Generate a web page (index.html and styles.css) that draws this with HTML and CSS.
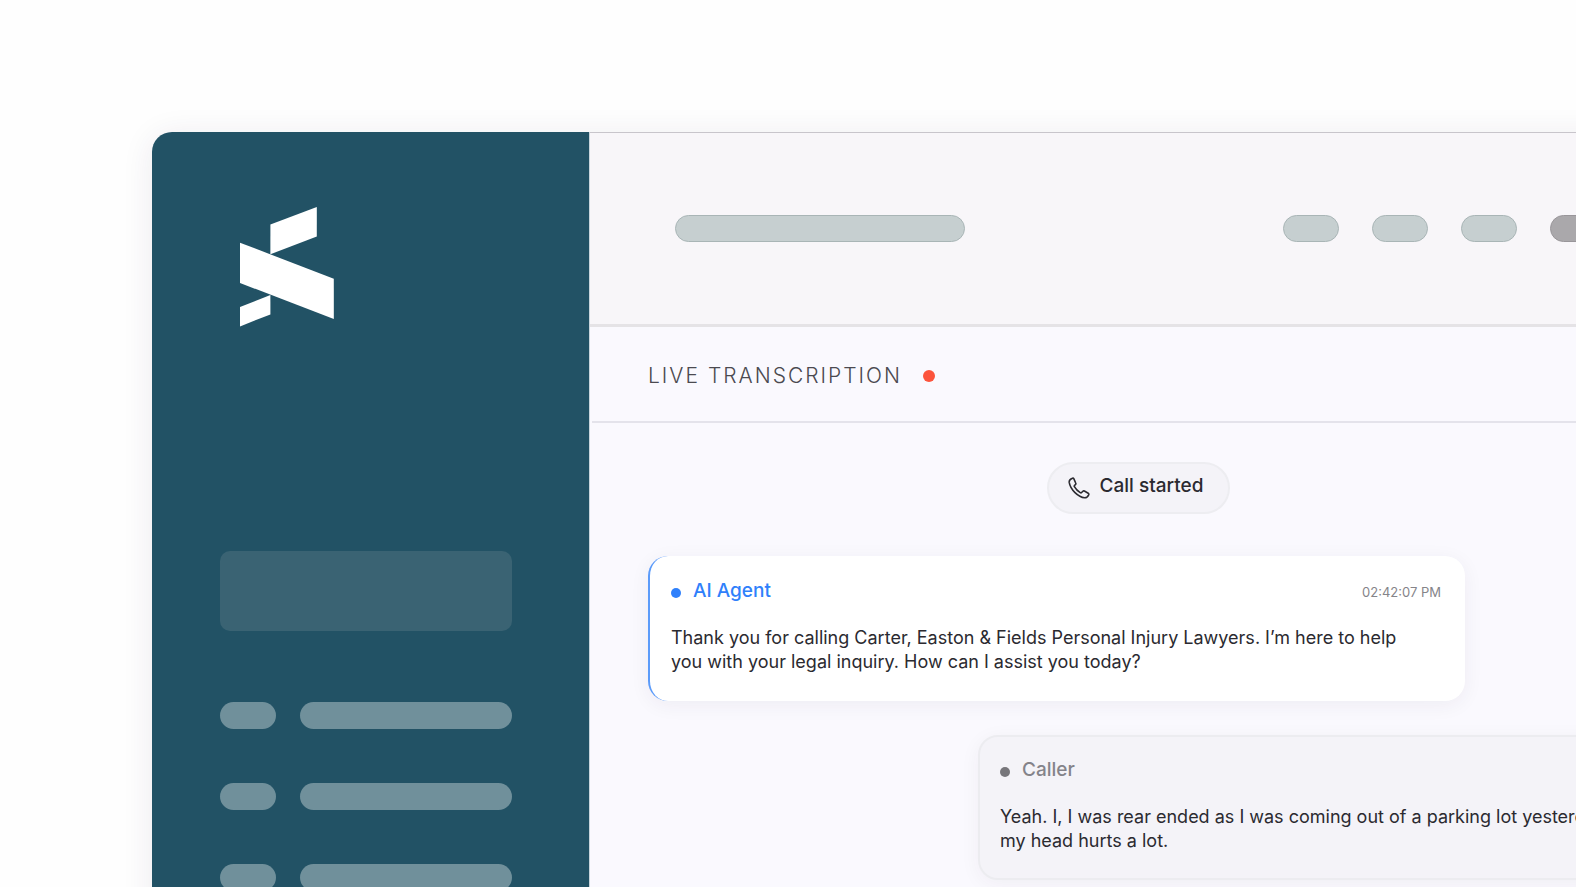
FILE: index.html
```html
<!DOCTYPE html>
<html lang="en">
<head>
<meta charset="utf-8">
<title>Live transcription</title>
<link rel="stylesheet" href="styles.css">
</head>
<body>
<div class="app">
  <aside class="sidebar">
    <svg class="logo" width="94" height="120" viewBox="0 0 94 120" fill="#fff" aria-hidden="true">
      <path d="M30.4 17.4 76.8 0v29.4L30.4 47.2z"/>
      <path d="M0 35.700 93.800 71.700v40.300L0 76z"/>
      <path d="M0 100 30.400 88v19.400L0 119.400z"/>
    </svg>
    <div class="feature"></div>
    <ul class="nav">
      <li class="nav-row"><span class="bar short"></span><span class="bar long"></span></li>
      <li class="nav-row"><span class="bar short"></span><span class="bar long"></span></li>
      <li class="nav-row"><span class="bar short"></span><span class="bar long"></span></li>
    </ul>
  </aside>
  <main class="main">
    <header class="topbar">
      <span class="pill wide"></span>
      <div class="actions">
        <span class="pill"></span><span class="pill"></span><span class="pill"></span><span class="pill dark"></span>
      </div>
    </header>
    <div class="heading">
      <h1 class="title">LIVE TRANSCRIPTION</h1>
      <span class="live-dot"></span>
    </div>
    <section class="transcript">
      <div class="event">
        <svg width="22" height="22" viewBox="0 0 22 22" fill="none" stroke="#2b2a30" stroke-width="1.600" stroke-linejoin="round" stroke-linecap="round" aria-hidden="true">
          <path d="M4.500 1.200 C3 1.700 1 3.200 1.200 5.400 C1.800 9 4 12.700 7 15.600 C10 18.500 13.400 20.500 16.600 20.800 C18.500 20.900 20 19.300 20.700 17.800 C21 17 20.800 16.600 20.200 16.200 L16.400 14 C15.800 13.700 15.300 13.800 14.900 14.200 L13.600 15.500 C13.200 15.900 12.700 15.900 12.200 15.600 C9.800 14.200 7.700 12 6.400 9.700 C6.100 9.200 6.200 8.800 6.600 8.400 L7.500 7.500 C7.900 7.100 8 6.600 7.700 6 L5.900 1.900 C5.600 1.300 5.100 1 4.500 1.200 Z"/>
        </svg>
        <span class="event-label">Call started</span>
      </div>
      <article class="message agent">
        <div class="meta">
          <span class="dot"></span>
          <h2 class="speaker">AI Agent</h2>
          <time class="time">02:42:07 PM</time>
        </div>
        <p class="text">Thank you for calling Carter, Easton &amp; Fields Personal Injury Lawyers. I’m here to help<br>you with your legal inquiry. How can I assist you today?</p>
      </article>
      <article class="message caller">
        <div class="meta">
          <span class="dot"></span>
          <h2 class="speaker">Caller</h2>
        </div>
        <p class="text">Yeah. I, I was rear ended as I was coming out of a parking lot yesterday<br>my head hurts a lot.</p>
      </article>
    </section>
  </main>
</div>
</body>
</html>
```
FILE: styles.css
```css
* { box-sizing: border-box; }

body {
  margin: 0;
  height: 100vh;
  overflow: hidden;
  background: #fefefe;
  font-family: Inter, "Liberation Sans", sans-serif;
  color: #2b2a30;
}

/* The window runs past the right and bottom edges of the page. */
.app {
  display: flex;
  margin: 132px -278px 0 152px;
  height: 100vh;
  border-radius: 20px 0 0 0;
  overflow: hidden;
  background: #faf9fe;
  box-shadow: 0 4px 32px rgba(60, 30, 80, 0.09);
}

.sidebar {
  flex: none;
  width: 437px;
  padding: 75px 77px 0 68px;
  background: #225265;
}
.logo { display: block; margin-left: 20px; }
.feature {
  height: 80px;
  margin-top: 224px;
  border-radius: 10px;
  background: #3a6373;
}
.nav {
  display: grid;
  gap: 54px;
  margin: 71px 0 0;
  padding: 0;
  list-style: none;
}
.nav-row { display: flex; gap: 24px; }
.bar { height: 27px; border-radius: 14px; background: #70909b; }
.short { width: 56px; }
.long { flex: 1; }

.main {
  flex: 1;
  min-width: 0;
  border-left: 1px solid #c9d5dc;
}
.topbar {
  display: flex;
  align-items: center;
  justify-content: space-between;
  height: 195px;
  padding: 0 86px 0 85px;
  border-top: 1px solid #c8c5cb;
  border-bottom: 3px solid #e5e3e6;
  background: #f8f6f9;
}
.actions { display: flex; gap: 33px; }
.pill {
  width: 56px;
  height: 27px;
  border: 1px solid #a9b5b6;
  border-radius: 14px;
  background: #c6cfd0;
}
.wide { width: 290px; }
.dark { width: 218px; border-color: #99969a; background: #aaa8ab; }

.heading {
  display: flex;
  align-items: center;
  gap: 21px;
  height: 96px;
  margin-left: 2px;
  padding: 3px 0 0 56px;
  border-bottom: 2px solid #e4e3eb;
}
.title {
  margin: 0;
  font-size: 21px;
  line-height: 28px;
  font-weight: 300;
  letter-spacing: 2px;
  color: #4b4a50;
}
.live-dot { width: 12px; height: 12px; border-radius: 50%; background: #fc543c; }

.transcript {
  display: flex;
  flex-direction: column;
  padding: 39px 59px 0 58px;
}
.event {
  display: flex;
  align-items: center;
  align-self: center;
  gap: 10px;
  height: 52px;
  margin-right: 166px;
  padding: 0 25px 0 19px;
  border: 2px solid #ededf1;
  border-radius: 26px;
  background: #f4f3f8;
}
.event-label {
  padding-bottom: 4px;
  font-size: 19px;
  line-height: 24px;
  font-weight: 500;
}
.message {
  width: 817px;
  height: 145px;
  padding: 23px 24px 24px 21px;
  border-radius: 20px;
}
.agent {
  margin-top: 42px;
  border-left: 2px solid #5b9bfa;
  background: #fff;
  box-shadow: 0 4px 20px rgba(50, 30, 60, 0.06);
}
.caller {
  align-self: flex-end;
  margin-top: 34px;
  padding: 21px 24px 24px 20px;
  border: 2px solid #ececf0;
  background: #f4f3f8;
  box-shadow: 0 4px 20px rgba(50, 30, 60, 0.05);
}
.meta { display: flex; align-items: center; gap: 12px; }
.dot { width: 10px; height: 10px; margin-top: 4px; border-radius: 50%; background: #2f80fb; }
.speaker {
  margin: 0;
  font-size: 19px;
  line-height: 24px;
  font-weight: 500;
  color: #2f80fb;
}
.caller .dot { background: #77767b; }
.caller .speaker { color: #84838a; }
.time { margin: 2px 0 0 auto; font-size: 13px; color: #858489; }
.text {
  margin: 23px 0 0;
  font-size: 18px;
  line-height: 24px;
  white-space: nowrap;
}
```
